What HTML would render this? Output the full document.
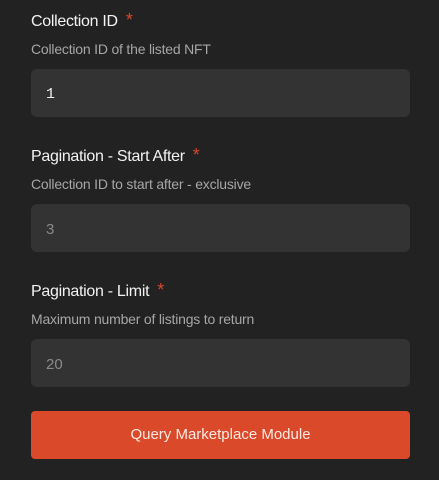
<!DOCTYPE html>
<html><head><style>
body{margin:0;width:439px;height:480px;background:#222222;font-family:"Liberation Sans",sans-serif;position:relative;overflow:hidden}
.t{position:absolute;left:31px;color:#f2f2f2;font-size:16px;line-height:20px;letter-spacing:-0.3px}
.t span{color:#d9472b;margin-left:8px;font-size:18px}
.d{position:absolute;left:31px;color:#a6a6a6;font-size:14px;line-height:18px;letter-spacing:-0.2px}
.i{position:absolute;left:31px;width:379px;height:48px;background:#333333;border-radius:6px;box-sizing:border-box;padding-left:15px;line-height:52px;font-size:15px}
.b{position:absolute;left:31px;top:411px;width:379px;height:48px;background:#d9492a;border-radius:4px;color:#fbeae5;text-align:center;line-height:48px;font-size:15px}
</style></head><body>
<div class="t" style="top:10px">Collection ID<span>*</span></div>
<div class="d" style="top:40px">Collection ID of the listed NFT</div>
<div class="i" style="top:69px;color:#eee;font-family:'Liberation Mono',monospace">1</div>
<div class="t" style="top:145px">Pagination - Start After<span>*</span></div>
<div class="d" style="top:175px">Collection ID to start after - exclusive</div>
<div class="i" style="top:204px;color:#8a8a8a">3</div>
<div class="t" style="top:280px">Pagination - Limit<span>*</span></div>
<div class="d" style="top:310px">Maximum number of listings to return</div>
<div class="i" style="top:339px;color:#8a8a8a">20</div>
<div class="b">Query Marketplace Module</div>
</body></html>
